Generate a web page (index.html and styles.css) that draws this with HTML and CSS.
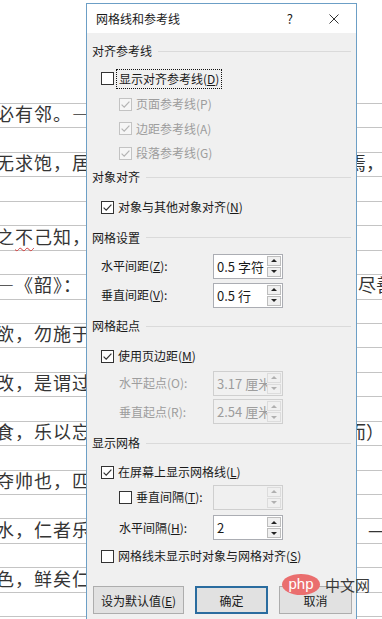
FILE: index.html
```html
<!DOCTYPE html>
<html lang="zh-CN">
<head>
    <meta charset="UTF-8">
    <meta name="viewport" content="width=device-width, initial-scale=1.0">
    <title>网格线和参考线</title>
    <link rel="stylesheet" href="styles.css">
</head>
<body>
    <div class="page">
        <div class="sheet">
            <div class="band"><span class="left">必有邻。—</span></div>
            <div class="band"></div>
            <div class="band"><span class="left">无求饱，居</span><span class="right">焉，</span></div>
            <div class="band"></div>
            <div class="band"></div>
            <div class="band"><span class="left">之<span class="typo">不</span>己知，</span></div>
            <div class="band"></div>
            <div class="band"><span class="left">—《韶》：</span><span class="right over">尽善</span></div>
            <div class="band"></div>
            <div class="band"><span class="left">欲，勿施于</span></div>
            <div class="band"></div>
            <div class="band"><span class="left">改，是谓过</span></div>
            <div class="band"></div>
            <div class="band"><span class="left">食，乐以忘</span><span class="right">而）</span></div>
            <div class="band"></div>
            <div class="band"><span class="left">夺帅也，匹</span></div>
            <div class="band"></div>
            <div class="band"><span class="left">水，仁者乐</span><span class="right">。—</span></div>
            <div class="band"></div>
            <div class="band"><span class="left">色，鲜矣仁</span></div>
            <div class="band"></div>
            <div class="band"></div>
        </div>

        <div class="dialog">
            <div class="titlebar">
                <span class="title">网格线和参考线</span>
                <span class="help">?</span>
                <svg class="close" viewBox="0 0 10 10"><path d="M0.5 0.5L9.5 9.5M9.5 0.5L0.5 9.5"/></svg>
            </div>

            <div class="body">
                <div class="group">对齐参考线</div>
                <div class="check">
                    <svg class="box" viewBox="0 0 13 13"><rect x="0.5" y="0.5" width="12" height="12"/></svg>
                    <span class="focus">显示对齐参考线(<u>D</u>)</span>
                </div>
                <div class="check sub dim">
                    <svg class="box off" viewBox="0 0 13 13"><rect x="0.5" y="0.5" width="12" height="12"/><path d="M2.6 6.6l2.6 2.6 5.2-5.6"/></svg>
                    <span>页面参考线(P)</span>
                </div>
                <div class="check sub dim">
                    <svg class="box off" viewBox="0 0 13 13"><rect x="0.5" y="0.5" width="12" height="12"/><path d="M2.6 6.6l2.6 2.6 5.2-5.6"/></svg>
                    <span>边距参考线(A)</span>
                </div>
                <div class="check sub dim">
                    <svg class="box off" viewBox="0 0 13 13"><rect x="0.5" y="0.5" width="12" height="12"/><path d="M2.6 6.6l2.6 2.6 5.2-5.6"/></svg>
                    <span>段落参考线(G)</span>
                </div>

                <div class="group">对象对齐</div>
                <div class="check">
                    <svg class="box" viewBox="0 0 13 13"><rect x="0.5" y="0.5" width="12" height="12"/><path d="M2.6 6.6l2.6 2.6 5.2-5.6"/></svg>
                    <span>对象与其他对象对齐(<u>N</u>)</span>
                </div>

                <div class="group">网格设置</div>
                <div class="field">
                    <span class="label">水平间距(<u>Z</u>):</span>
                    <div class="spinbox">
                        <span class="spin-val">0.5 字符</span>
                        <span class="spin-btns"><span class="up"></span><span class="down"></span></span>
                    </div>
                </div>
                <div class="field">
                    <span class="label">垂直间距(<u>V</u>):</span>
                    <div class="spinbox">
                        <span class="spin-val">0.5 行</span>
                        <span class="spin-btns"><span class="up"></span><span class="down"></span></span>
                    </div>
                </div>

                <div class="group">网格起点</div>
                <div class="check">
                    <svg class="box" viewBox="0 0 13 13"><rect x="0.5" y="0.5" width="12" height="12"/><path d="M2.6 6.6l2.6 2.6 5.2-5.6"/></svg>
                    <span>使用页边距(<u>M</u>)</span>
                </div>
                <div class="field dim">
                    <span class="label sub">水平起点(O):</span>
                    <div class="spinbox off">
                        <span class="spin-val">3.17 厘米</span>
                        <span class="spin-btns"><span class="up"></span><span class="down"></span></span>
                    </div>
                </div>
                <div class="field dim">
                    <span class="label sub">垂直起点(R):</span>
                    <div class="spinbox off">
                        <span class="spin-val">2.54 厘米</span>
                        <span class="spin-btns"><span class="up"></span><span class="down"></span></span>
                    </div>
                </div>

                <div class="group">显示网格</div>
                <div class="check">
                    <svg class="box" viewBox="0 0 13 13"><rect x="0.5" y="0.5" width="12" height="12"/><path d="M2.6 6.6l2.6 2.6 5.2-5.6"/></svg>
                    <span>在屏幕上显示网格线(<u>L</u>)</span>
                </div>
                <div class="field">
                    <span class="label sub check-label">
                        <svg class="box" viewBox="0 0 13 13"><rect x="0.5" y="0.5" width="12" height="12"/></svg>
                        <span>垂直间隔(<u>T</u>):</span>
                    </span>
                    <div class="spinbox off">
                        <span class="spin-val"></span>
                        <span class="spin-btns"><span class="up"></span><span class="down"></span></span>
                    </div>
                </div>
                <div class="field">
                    <span class="label sub">水平间隔(<u>H</u>):</span>
                    <div class="spinbox">
                        <span class="spin-val">2</span>
                        <span class="spin-btns"><span class="up"></span><span class="down"></span></span>
                    </div>
                </div>
                <div class="check">
                    <svg class="box" viewBox="0 0 13 13"><rect x="0.5" y="0.5" width="12" height="12"/></svg>
                    <span>网格线未显示时对象与网格对齐(<u>S</u>)</span>
                </div>

                <div class="actions">
                    <button class="btn wide" type="button">设为默认值(<u>E</u>)</button>
                    <button class="btn default" type="button">确定</button>
                    <button class="btn" type="button">取消</button>
                </div>
            </div>
        </div>

        <div class="watermark">
            <span class="php">php</span>
            <span class="cn">中文网</span>
        </div>
    </div>
</body>
</html>
```

FILE: styles.css
```css
body {
    margin: 0;
    background-color: #fff;
    font-family: "Noto Sans CJK SC", "Noto Sans", sans-serif;
    overflow: hidden;
}

.page {
    position: relative;
    width: 382px;
    height: 619px;
    overflow: hidden;
}

/* document behind the dialog */
.sheet {
    padding-top: 103px;
}

.band {
    box-sizing: border-box;
    height: 24.45px;
    border-top: 1px solid #c4c4c4;
    display: flex;
    justify-content: space-between;
    align-items: center;
    padding-bottom: 3px;
    font-size: 18px;
    line-height: 1.2;
    color: #353535;
    white-space: nowrap;
}

.band .left {
    margin-left: -4px;
    letter-spacing: 1px;
}

.band .right {
    margin-right: -2px;
}

.band .right.over {
    margin-right: -12px;
}

.typo {
    text-decoration: underline wavy #d23a3a;
    text-decoration-thickness: 1px;
    text-underline-offset: 3px;
}

/* dialog */
.dialog {
    position: absolute;
    left: 86px;
    top: 3px;
    width: 269px;
    height: 640px;
    border: 1px solid #6c9fc6;
    background-color: #f0f0f0;
    font-size: 12px;
    line-height: 16px;
    color: #1a1a1a;
}

.titlebar {
    height: 29px;
    background-color: #fff;
    display: flex;
    align-items: center;
    padding-left: 9px;
}

.title {
    flex: 1;
}

.help {
    font-size: 13px;
    margin-right: 36px;
}

.close {
    width: 10px;
    height: 10px;
    margin-right: 17px;
    stroke: #333;
    stroke-width: 1;
    fill: none;
}

.body {
    padding-top: 4px;
    display: grid;
    grid-template-rows: 28px 27px 24px 25px 24px 24px 36px 25px 32px 26px 36px 24px 30px 27px 36px 22px 28px 33px 24px auto;
    align-items: center;
}

.group {
    display: flex;
    align-items: center;
    padding: 0 5px;
}

.group::after {
    content: "";
    flex: 1;
    height: 1px;
    margin-left: 6px;
    background-color: #dadada;
}

.check {
    display: flex;
    align-items: center;
    gap: 4px;
    padding-left: 14px;
}

.check.sub {
    padding-left: 32px;
}

.dim {
    color: #9d9d9d;
}

.box {
    flex: none;
    width: 13px;
    height: 13px;
}

.box rect {
    fill: #fff;
    stroke: #333;
}

.box path {
    fill: none;
    stroke: #333;
    stroke-width: 1.2;
}

.box.off rect {
    fill: #f6f6f6;
    stroke: #c3c3c3;
}

.box.off path {
    stroke: #b4b4b4;
}

.focus {
    outline: 1px dotted #111;
    outline-offset: 1px;
    padding: 0 1px;
}

.field {
    display: grid;
    grid-template-columns: 126px 70px;
    align-items: center;
}

.field .label {
    padding-left: 14px;
}

.field .label.sub {
    padding-left: 32px;
}

.check-label {
    display: flex;
    align-items: center;
    gap: 4px;
}

.spinbox {
    box-sizing: border-box;
    height: 25px;
    border: 1px solid #abadb3;
    background-color: #fff;
    display: flex;
    color: #1a1a1a;
}

.spin-val {
    flex: 1;
    padding-left: 3px;
    font-size: 13px;
    line-height: 23px;
    white-space: nowrap;
    overflow: hidden;
}

.spin-btns {
    width: 14px;
    display: flex;
    flex-direction: column;
    gap: 1px;
    padding: 1px 1px 1px 0;
}

.spin-btns span {
    flex: 1;
    border: 1px solid #bdbdbd;
    background-color: #f0f0f0;
    display: flex;
    align-items: center;
    justify-content: center;
}

.spin-btns .up::before {
    content: "";
    border-left: 3px solid transparent;
    border-right: 3px solid transparent;
    border-bottom: 3px solid #222;
}

.spin-btns .down::before {
    content: "";
    border-left: 3px solid transparent;
    border-right: 3px solid transparent;
    border-top: 3px solid #222;
}

.spinbox.off {
    border-color: #cfcfcf;
    background-color: #f0f0f0;
    color: #9d9d9d;
}

.spinbox.off .spin-btns span {
    border-color: #dcdcdc;
}

.spinbox.off .up::before {
    border-bottom-color: #b0b0b0;
}

.spinbox.off .down::before {
    border-top-color: #b0b0b0;
}

.actions {
    display: flex;
    gap: 11px;
    padding: 18px 0 0 6px;
}

.btn {
    box-sizing: border-box;
    width: 73px;
    height: 28px;
    padding: 0;
    border: 1px solid #adadad;
    background-color: #e1e1e1;
    font-family: inherit;
    font-size: 12px;
    color: #1a1a1a;
}

.btn.wide {
    width: 91px;
}

.btn.default {
    border: 2px solid #2a6c9f;
}

/* site watermark */
.watermark {
    position: absolute;
    left: 282px;
    top: 574px;
    display: flex;
    align-items: center;
    gap: 5px;
}

.php {
    width: 38px;
    height: 21px;
    border-radius: 50%;
    background-color: #ea6e6e;
    color: #fff;
    font-family: "Liberation Sans", sans-serif;
    font-size: 15px;
    line-height: 19px;
    text-align: center;
}

.cn {
    font-size: 15px;
    color: #3a3a3a;
}
```
